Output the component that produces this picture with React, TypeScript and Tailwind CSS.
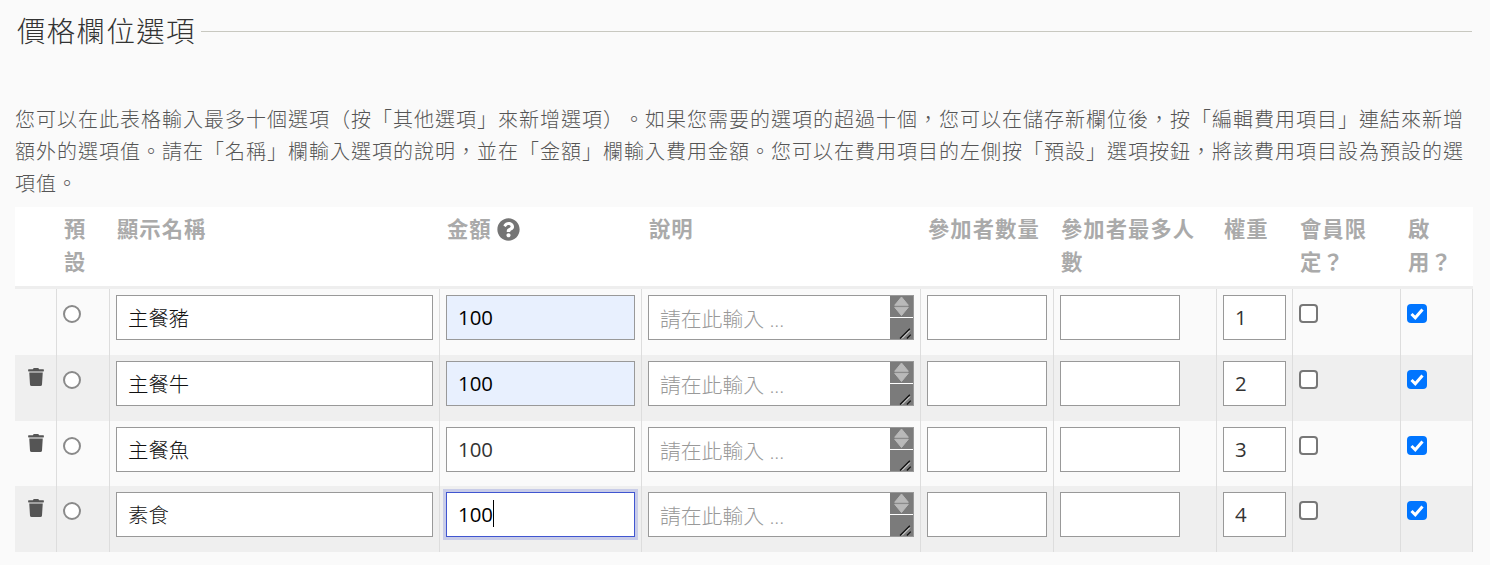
import { FaQuestionCircle, FaTrash } from "react-icons/fa";

const rows = [
  { name: "主餐豬", price: "100", weight: "1", tinted: true, canDelete: false },
  { name: "主餐牛", price: "100", weight: "2", tinted: true, canDelete: true },
  { name: "主餐魚", price: "100", weight: "3", tinted: false, canDelete: true },
  { name: "素食", price: "100", weight: "4", tinted: false, canDelete: true, focused: true },
];

const headers = ["預設", "顯示名稱", "金額", "說明", "參加者數量", "參加者最多人數", "權重", "會員限定？", "啟用？"];

const inputBase =
  "block h-[45px] border border-[#999] pl-[11px] pr-[12px] pb-[2px] text-[20.4px] text-[#333] outline-none";

function SpinnerBox() {
  return (
    <div className="absolute right-[1px] top-[1px] flex h-[43px] w-[23px] flex-col gap-[1px]">
      <svg width="23" height="21" viewBox="0 0 23 21" className="block bg-[#7b7b7b]">
        <path d="M11.5 1 L18.5 9.5 H4.5 Z" fill="#b9b9b9" stroke="#b9b9b9" strokeLinejoin="round" />
        <path d="M4.5 11.5 H18.5 L11.5 20 Z" fill="#b9b9b9" stroke="#b9b9b9" strokeLinejoin="round" />
      </svg>
      <svg width="23" height="22" viewBox="0 0 23 22" className="block bg-[#7b7b7b]">
        <path d="M10 21 L20 11 M17 21 L21 17" stroke="#111" strokeWidth="1.3" />
        <path d="M12 21 L20 13" stroke="#eee" strokeWidth="1" />
      </svg>
    </div>
  );
}

function Row({ row, index }: { row: (typeof rows)[number]; index: number }) {
  const cell = "border-l border-[#ddd] align-top pt-[6px] px-[6px]";
  return (
    <tr className={`${index === 2 ? "h-[65px]" : "h-[66px]"} ${index % 2 === 1 ? "bg-[#efefef]" : "bg-[#fafafa]"}`}>
      <td className="align-top pt-[13px] pl-[12px]">
        {row.canDelete && <FaTrash className="text-[18px] text-[#555]" />}
      </td>
      <td className={`${cell} !pt-[16px]`}>
        <input
          type="radio"
          name="default"
          className="block h-[18px] w-[18px] appearance-none rounded-full border-2 border-[#8a8a8a] bg-white"
        />
      </td>
      <td className={cell}>
        <input defaultValue={row.name} className={`${inputBase} w-[317px] bg-white font-light !text-[#111]`} />
      </td>
      <td className={cell}>
        <div className="relative w-[189px]">
          <input
            defaultValue={row.price}
            className={`${inputBase} w-full ${row.tinted ? "bg-[#e8f0fe] !text-black" : "bg-white"} ${
              row.focused ? "!border-[#4055d0] !text-black shadow-[0_0_0_3px_#c8cce8]" : ""
            }`}
          />
          {row.focused && <span className="absolute left-[47px] top-[8px] h-[27px] w-px bg-black" />}
        </div>
      </td>
      <td className={cell}>
        <div className="relative w-[266px]">
          <textarea
            rows={1}
            placeholder="請在此輸入 ..."
            className={`${inputBase} w-full resize-none overflow-hidden bg-white !text-[20.8px] py-[7px] font-light leading-[32px] placeholder:text-[#999]`}
          />
          <SpinnerBox />
        </div>
      </td>
      <td className={cell}>
        <input className={`${inputBase} w-[120px] bg-white`} />
      </td>
      <td className={cell}>
        <input className={`${inputBase} w-[120px] bg-white`} />
      </td>
      <td className={cell}>
        <input defaultValue={row.weight} className={`${inputBase} w-[63px] bg-white`} />
      </td>
      <td className={`${cell} !pt-[15px]`}>
        <input
          type="checkbox"
          className="block h-[19px] w-[19px] appearance-none rounded-[4px] border-2 border-[#777] bg-white"
        />
      </td>
      <td className={`${cell} border-r !pt-[15px]`}>
        <div className="relative h-[19px] w-[20px]">
          <input
            type="checkbox"
            defaultChecked
            className="block h-[19px] w-[20px] appearance-none rounded-[4px] bg-[#0075ff]"
          />
          <svg viewBox="0 0 20 19" className="pointer-events-none absolute inset-0 h-[19px] w-[20px]">
            <path d="M4.5 10 L8.3 13.8 L15.5 5.5" fill="none" stroke="#fff" strokeWidth="3" />
          </svg>
        </div>
      </td>
    </tr>
  );
}

export default function App() {
  return (
    <div
      lang="zh-TW"
      className="h-[565px] w-[1490px] overflow-hidden bg-[#fafafa] pl-[15px] pr-[17px] font-['Open_Sans','Noto_Sans_CJK_TC',sans-serif] [text-spacing-trim:space-all]"
    >
      <div className="flex h-[62px] items-center">
        <h2 className="pl-[2px] text-[28.4px] font-light leading-[62px] tracking-[0.05em] text-[#333]">價格欄位選項</h2>
        <div className="ml-[5px] mr-[1px] h-px flex-1 bg-[#c8c8c0]" />
      </div>
      <p className="mt-[42px] text-[20px] font-light leading-[32px] tracking-[0.05em] text-[#555]">
        您可以在此表格輸入最多十個選項（按「其他選項」來新增選項）。如果您需要的選項的超過十個，您可以在儲存新欄位後，按「編輯費用項目」連結來新增額外的選項值。請在「名稱」欄輸入選項的說明，並在「金額」欄輸入費用金額。您可以在費用項目的左側按「預設」選項按鈕，將該費用項目設為預設的選項值。
      </p>
      <table className="mt-[7px] w-[1458px] table-fixed border-separate border-spacing-0">
        <colgroup>
          <col className="w-[41px]" />
          <col className="w-[53px]" />
          <col className="w-[330px]" />
          <col className="w-[202px]" />
          <col className="w-[279px]" />
          <col className="w-[133px]" />
          <col className="w-[163px]" />
          <col className="w-[76px]" />
          <col className="w-[108px]" />
          <col className="w-[73px]" />
        </colgroup>
        <thead>
          <tr className="h-[82px] bg-white text-left align-top text-[21.3px] leading-[32.5px] tracking-[0.05em] text-[#aaa]">
            <th className="border-b-[3px] border-[#eee] font-bold" />
            {headers.map((label) => (
              <th key={label} className="border-b-[3px] border-[#eee] px-[8px] pt-[6px] font-bold">
                {label === "金額" ? (
                  <span className="inline-flex items-center gap-[5px]">
                    {label} <FaQuestionCircle className="text-[23px] text-[#757575]" />
                  </span>
                ) : (
                  label
                )}
              </th>
            ))}
          </tr>
        </thead>
        <tbody>
          {rows.map((row, i) => (
            <Row key={row.name} row={row} index={i} />
          ))}
        </tbody>
      </table>
    </div>
  );
}
